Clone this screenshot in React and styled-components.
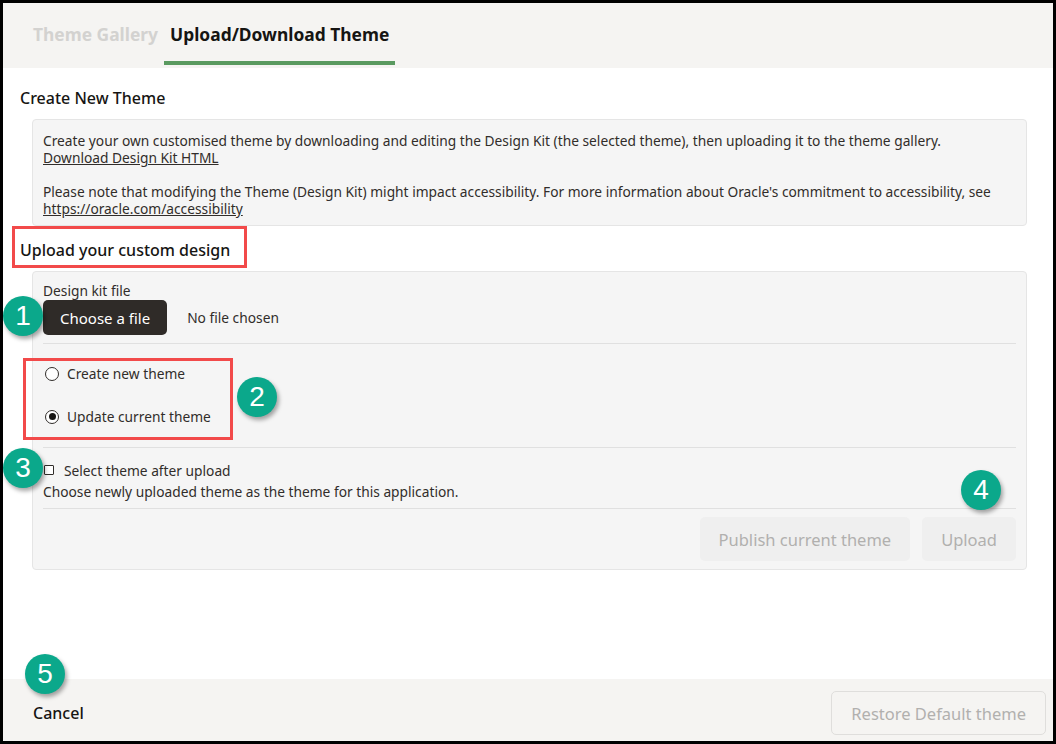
import React from "react";
import styled, { createGlobalStyle } from "styled-components";

const GlobalStyle = createGlobalStyle`
  html, body { margin: 0; padding: 0; background: #000; }
  * { box-sizing: border-box; }
  body { font-family: "Noto Sans", "Open Sans", sans-serif; color: #312d2a; }
`;

const Frame = styled.div`
  position: relative;
  width: 1056px;
  height: 744px;
  border: 3px solid #000;
  background: #fff;
  display: flex;
  flex-direction: column;
`;

const TabBar = styled.div`
  height: 65px;
  flex: none;
  background: #f5f4f2;
  display: flex;
  align-items: stretch;
  padding: 0 0 3px 24px;
`;

const Tab = styled.div`
  display: flex;
  align-items: center;
  padding: 0 6px;
  font-size: 17.4px;
  font-weight: 700;
  color: ${(p) => (p.$active ? "#161513" : "#d3d2d0")};
  border-bottom: 4px solid ${(p) => (p.$active ? "#5a9a60" : "transparent")};
  padding-top: 3px;
`;

const Content = styled.div`
  flex: 1;
  padding: 0 26px 0 17px;
  display: flex;
  flex-direction: column;
  align-items: flex-start;
`;

const SectionTitle = styled.h2`
  position: relative;
  margin: ${(p) => p.$mt}px 0 10px;
  font-size: 16px;
  font-weight: 500;
  line-height: 22px;
  color: #161513;
  ${(p) =>
    p.$highlight &&
    `
    &::after {
      content: "";
      position: absolute;
      left: -8px;
      right: -17px;
      top: -13px;
      bottom: -7px;
      border: 3px solid #f24a4a;
      pointer-events: none;
    }
  `}
`;

const Panel = styled.div`
  align-self: stretch;
  margin-left: 12px;
  background: #f5f5f5;
  border: 1px solid #e5e5e5;
  border-radius: 4px;
  padding: ${(p) => p.$pad};
`;

const Para = styled.p`
  margin: ${(p) => (p.$gap ? "17px 0 0" : "0")};
  font-size: 13.75px;
  line-height: 17px;
  color: #312d2a;
`;

const Link = styled.a`
  color: #312d2a;
  text-decoration: underline;
`;

const FieldLabel = styled.div`
  font-size: 13.75px;
  line-height: 18px;
  color: #312d2a;
`;

const FileRow = styled.div`
  display: flex;
  align-items: center;
  gap: 20px;
`;

const DarkButton = styled.button`
  height: 35px;
  padding: 0 17px;
  border: none;
  border-radius: 5px;
  background: #2f2b28;
  color: #fff;
  font-family: inherit;
  font-size: 15px;
  font-weight: 400;
`;

const MutedText = styled.span`
  font-size: 13.75px;
  color: #312d2a;
`;

const Divider = styled.div`
  height: 1px;
  background: #e0e0e0;
  margin: ${(p) => p.$m};
`;

const Annotated = styled.div`
  position: relative;
  display: inline-flex;
  flex-direction: column;
  &::after {
    content: "";
    position: absolute;
    top: ${(p) => p.$t}px;
    left: ${(p) => p.$l}px;
    right: ${(p) => p.$r}px;
    bottom: ${(p) => p.$b}px;
    border: 3px solid #f24a4a;
    pointer-events: none;
  }
`;

const RadioRow = styled.label`
  height: 43px;
  display: flex;
  align-items: center;
  gap: 8px;
  padding-left: 2px;
  font-size: 13.75px;
  color: #312d2a;
`;

const RadioDot = styled.span`
  width: 14px;
  height: 14px;
  border-radius: 50%;
  border: 1.5px solid #312d2a;
  background: #fff;
  display: flex;
  align-items: center;
  justify-content: center;
  &::after {
    content: "";
    width: 7px;
    height: 7px;
    border-radius: 50%;
    background: ${(p) => (p.$checked ? "#161513" : "transparent")};
  }
`;

const CheckRow = styled.label`
  height: 20px;
  margin-top: 12px;
  display: flex;
  align-items: center;
  gap: 10px;
  padding-left: 1px;
  font-size: 13.75px;
  color: #312d2a;
`;

const CheckBox = styled.span`
  width: 10px;
  height: 10px;
  border: 1px solid #312d2a;
  border-radius: 1px;
  background: #fff;
`;

const Help = styled.div`
  margin-top: 2px;
  font-size: 13.75px;
  line-height: 20px;
  color: #312d2a;
`;

const ActionRow = styled.div`
  display: flex;
  justify-content: flex-end;
  gap: 12px;
  padding-top: 8px;
`;

const GhostButton = styled.button`
  height: 44px;
  padding: 0 19px;
  border: ${(p) => (p.$outlined ? "1px solid #dfdedc" : "none")};
  border-radius: 5px;
  background: ${(p) => (p.$outlined ? "transparent" : "#efefef")};
  color: #b1b0ae;
  font-family: inherit;
  font-size: 16.5px;
`;

const Footer = styled.div`
  flex: none;
  height: 62px;
  background: #f5f4f2;
  display: flex;
  align-items: center;
  justify-content: space-between;
  padding: 6px 7px 0 30px;
`;

const CancelText = styled.span`
  font-size: 16px;
  font-weight: 500;
  color: #161513;
`;

const Badge = styled.div`
  position: absolute;
  left: ${(p) => p.$x - 3}px;
  top: ${(p) => p.$y - 3}px;
  width: 40px;
  height: 40px;
  border-radius: 50%;
  background: #0ba88b;
  box-shadow: 2px 3px 4px rgba(0, 0, 0, 0.35);
  color: #fff;
  font-family: "Liberation Sans", Arial, sans-serif;
  font-size: 28px;
  display: flex;
  align-items: center;
  justify-content: center;
  z-index: 2;
`;

export default function App() {
  return (
    <>
      <GlobalStyle />
      <Frame>
        <TabBar>
          <Tab>Theme Gallery</Tab>
          <Tab $active>Upload/Download Theme</Tab>
        </TabBar>

        <Content>
          <SectionTitle $mt={19}>Create New Theme</SectionTitle>
          <Panel $pad="12px 10px 8px">
            <Para>
              Create your own customised theme by downloading and editing the Design Kit (the
              selected theme), then uploading it to the theme gallery.
              <br />
              <Link href="#">Download Design Kit HTML</Link>
            </Para>
            <Para $gap>
              Please note that modifying the Theme (Design Kit) might impact accessibility. For
              more information about Oracle's commitment to accessibility, see
              <br />
              <Link href="#">https://oracle.com/accessibility</Link>
            </Para>
          </Panel>

          <SectionTitle $mt={13} $highlight>
            Upload your custom design
          </SectionTitle>
          <Panel $pad="10px 10px 8px">
            <FieldLabel>Design kit file</FieldLabel>
            <FileRow>
              <DarkButton>Choose a file</DarkButton>
              <MutedText>No file chosen</MutedText>
            </FileRow>
            <Divider $m="8px 0 8px" />
            <Annotated $t={6} $l={-20} $r={-22} $b={-2}>
              <RadioRow>
                <RadioDot />
                Create new theme
              </RadioRow>
              <RadioRow>
                <RadioDot $checked />
                Update current theme
              </RadioRow>
            </Annotated>
            <Divider $m="9px 0 0" />
            <CheckRow>
              <CheckBox />
              Select theme after upload
            </CheckRow>
            <Help>Choose newly uploaded theme as the theme for this application.</Help>
            <Divider $m="6px 0 0" />
            <ActionRow>
              <GhostButton>Publish current theme</GhostButton>
              <GhostButton>Upload</GhostButton>
            </ActionRow>
          </Panel>
        </Content>

        <Footer>
          <CancelText>Cancel</CancelText>
          <GhostButton $outlined>Restore Default theme</GhostButton>
        </Footer>

        <Badge $x={3} $y={296}>1</Badge>
        <Badge $x={237} $y={377}>2</Badge>
        <Badge $x={3} $y={448}>3</Badge>
        <Badge $x={961} $y={470}>4</Badge>
        <Badge $x={25} $y={654}>5</Badge>
      </Frame>
    </>
  );
}
